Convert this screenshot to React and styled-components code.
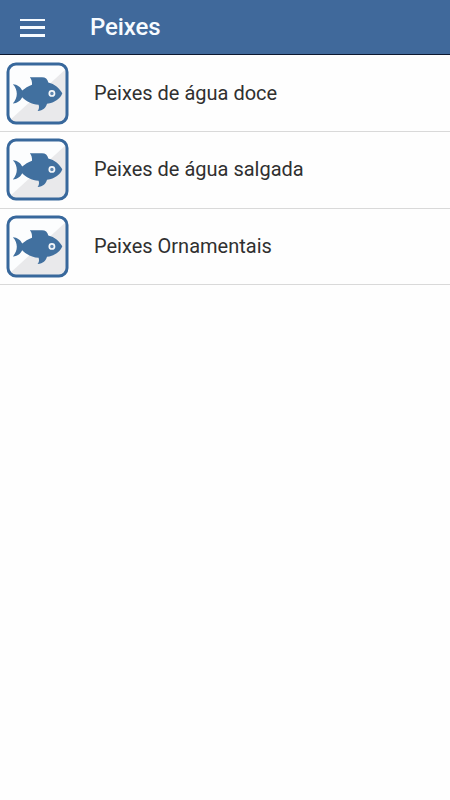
import React from "react";
import styled, { createGlobalStyle } from 'styled-components';

const GlobalStyle = createGlobalStyle`
    body {
        margin:0;
        background-color:#fefefe;
        font-family:Roboto, "Liberation Sans", sans-serif;
    }
`
const Toolbar = styled.header`
    box-sizing:border-box;
    height:55px;
    display:flex;
    align-items:center;
    padding-left:20px;
    background-color:#40699b;
    border-bottom:1px solid #0d1830;
`
const MenuButton = styled.button`
    width:25px;
    height:18px;
    margin:1px 0 0;
    padding:0;
    display:flex;
    flex-direction:column;
    justify-content:space-between;
    border:none;
    background:none;
`
const MenuBar = styled.span`
    width:100%;
    height:2.5px;
    background-color:#f7fbff;
`
const Title = styled.h1`
    margin:0 0 0 45px;
    font-size:24px;
    line-height:28px;
    font-weight:500;
    letter-spacing:-0.1px;
    color:#f7fbff;
`
const List = styled.ul`
    margin:0;
    padding:1px 0 0;
    list-style:none;
`
const Item = styled.li`
    box-sizing:border-box;
    height:76.33px;
    display:flex;
    align-items:center;
    padding-left:6px;
    border-bottom:1px solid #d9d9d9;
`
const Icon = styled.svg`
    width:63px;
    height:63px;
    flex:none;
`
const Label = styled.span`
    margin:-1px 0 0 25px;
    font-size:20px;
    line-height:24px;
    color:#303030;
`

const categories = ['Peixes de água doce', 'Peixes de água salgada', 'Peixes Ornamentais'];

const FishIcon = () => (
    <Icon viewBox="0 0 63 63" aria-hidden="true">
        <rect x="2" y="2" width="59" height="59" rx="8" fill="#fcfdfe" />
        <path d="M61 6V53Q61 61 53 61H6L3 59Z" fill="#e9e9eb" />
        <rect x="2" y="2" width="59" height="59" rx="8" fill="none" stroke="#38689c" strokeWidth="3" />
        <path
            d="M6.8 22.3C11.5 22.5 14.5 25 16.2 28.6C19 26.3 22 24.3 26 22.8C26.2 19.5 25.5 17 23.8 15.2H36C39.5 15.2 41.5 17 42.3 20.4C48.5 21.8 53.5 26 56.3 31.3C54.5 36.5 49 40.8 41 41.8C39.8 46 37.2 48.5 31.6 49C33.2 47 33.3 45 32.6 42.8C25.5 42.4 20 39 16.2 35.2C14.4 38.8 11.5 41.2 6.8 41.4C9.5 38.5 10.8 35.4 10.8 31.8C10.8 28.2 9.5 25 6.8 22.3Z"
            fill="#41709f"
        />
        <circle cx="45.9" cy="31.4" r="2.6" fill="#5f87b0" stroke="#f4f7fa" strokeWidth="1.7" />
    </Icon>
)

class App extends React.Component {

  render() {
      return (
        <>
            <GlobalStyle />
            <Toolbar>
                <MenuButton aria-label="Menu">
                    <MenuBar />
                    <MenuBar />
                    <MenuBar />
                </MenuButton>
                <Title>Peixes</Title>
            </Toolbar>
            <List>
                {categories.map((name) => (
                    <Item key={name}>
                        <FishIcon />
                        <Label>{name}</Label>
                    </Item>
                ))}
            </List>
        </>
      );
  }
}

export default App
